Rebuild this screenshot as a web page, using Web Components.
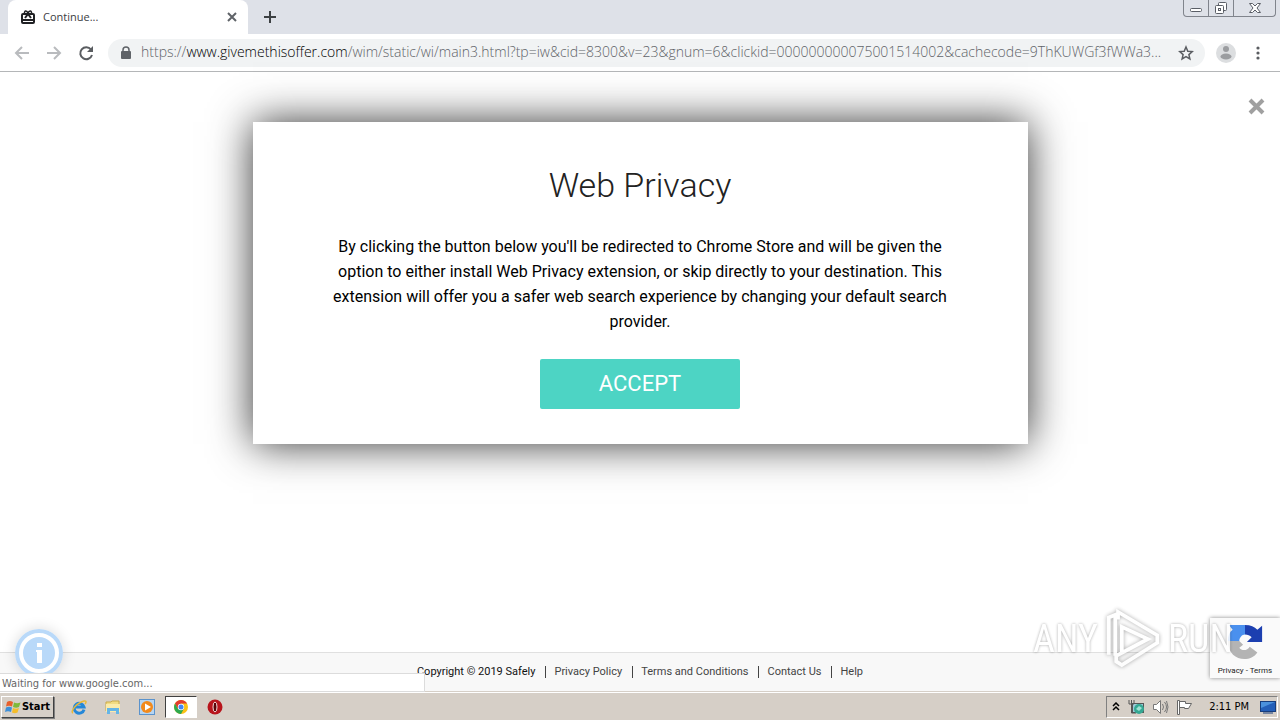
<!DOCTYPE html>
<html lang="en">
  <head>
    <meta charset="UTF-8" />
    <meta name="viewport" content="width=device-width, initial-scale=1.0" />
    <title>Continue...</title>
    <style>
      body {
        margin: 0;
        height: 100vh;
        display: flex;
        flex-direction: column;
        overflow: hidden;
        background: #fff;
        font-family: Roboto, "Liberation Sans", sans-serif;
      }
    </style>
  </head>
  <body>
    <template id="browser-tabs">
      <style>
        :host {
          display: flex;
          height: 34px;
          padding-left: 8px;
          background: #dee1e8;
        }
        button {
          border: 0;
          padding: 0;
          background: none;
          display: flex;
          align-items: center;
          justify-content: center;
        }
        .tab {
          box-sizing: border-box;
          width: 240px;
          padding: 0 9px 0 12px;
          display: flex;
          align-items: center;
          gap: 7px;
          background: #fff;
          border-radius: 8px 8px 0 0;
          font: 11px/16px "Open Sans", sans-serif;
          color: #3c4043;
        }
        .name {
          flex: 1;
        }
        .new {
          width: 44px;
        }
        .window {
          display: flex;
          margin-left: auto;
          margin-right: 4px;
          height: 17px;
          box-sizing: border-box;
          border: 1px solid #80848c;
          border-top: 0;
          border-radius: 0 0 4px 4px;
        }
        .window button {
          width: 25px;
          border-right: 1px solid #80848c;
        }
        .window button:last-child {
          width: 41px;
          border: 0;
        }
      </style>
      <div class="tab">
        <svg width="16" height="16" fill="none" stroke="#202124" stroke-width="2">
          <rect x="2" y="5" width="12" height="9" rx="1" />
          <path d="M2 11h12M5 9l3-4 3 4" />
          <path d="M8 4.500C7 1 4 1.500 4.500 4.500M8 4.500c1-3.500 4-3 3.500 0" stroke-width="1.500" />
        </svg>
        <span class="name"><slot></slot></span>
        <button aria-label="Close tab">
          <svg width="14" height="14" stroke="#5f6368" stroke-width="2"><path d="M3 3l8 8M11 3l-8 8" /></svg>
        </button>
      </div>
      <button class="new" aria-label="New tab">
        <svg width="14" height="14" stroke="#3c4043" stroke-width="2"><path d="M7 1v12M1 7h12" /></svg>
      </button>
      <div class="window">
        <button aria-label="Minimize">
          <svg width="14" height="14" fill="#fff" stroke="#5a5e66"><rect x="1.500" y="7.500" width="11" height="3" rx="1" /></svg>
        </button>
        <button aria-label="Restore">
          <svg width="14" height="14" fill="#fff" stroke="#5a5e66">
            <rect x="4.500" y="1.500" width="8" height="8" rx="1" />
            <rect x="1.500" y="4.500" width="8" height="8" rx="1" />
            <rect x="4.500" y="7.500" width="2" height="2" />
          </svg>
        </button>
        <button aria-label="Close">
          <svg width="14" height="14" viewBox="0 0 14 14" fill="#fff" stroke="#5a5e66">
            <path d="M1.500 2.500h3L7 5l2.500-2.500h3L9 7l3.500 4.500h-3L7 9l-2.500 2.500h-3L5 7z" />
          </svg>
        </button>
      </div>
    </template>

    <template id="browser-toolbar">
      <style>
        :host {
          display: flex;
          align-items: center;
          box-sizing: border-box;
          height: 38px;
          padding: 0 11px;
          gap: 10px;
          background: #fff;
          border-bottom: 1px solid #b4b6b8;
        }
        button {
          border: 0;
          padding: 0;
          background: none;
          width: 22px;
          height: 22px;
          flex: none;
          display: flex;
          align-items: center;
          justify-content: center;
        }
        .address {
          flex: 1;
          min-width: 0;
          height: 28px;
          margin-left: 1px;
          padding: 0 8px 0 12px;
          display: flex;
          align-items: center;
          gap: 9px;
          background: #f1f3f4;
          border-radius: 14px;
          font: 300 14px/20px "Open Sans", sans-serif;
          color: #5f6368;
        }
        .url {
          flex: 1;
          min-width: 0;
          padding-bottom: 1px;
          overflow: hidden;
          white-space: nowrap;
        }
        ::slotted(b) {
          font-weight: 300;
          color: #000;
        }
      </style>
      <button aria-label="Back">
        <svg width="16" height="16" fill="none" stroke="#b9bbbe" stroke-width="2"><path d="M15 8H2M8 2L2 8l6 6" /></svg>
      </button>
      <button aria-label="Forward">
        <svg width="16" height="16" fill="none" stroke="#b9bbbe" stroke-width="2"><path d="M1 8h13M8 2l6 6-6 6" /></svg>
      </button>
      <button aria-label="Reload">
        <svg width="16" height="16" fill="none" stroke="#5a5d61" stroke-width="2">
          <path d="M13 4.500A6 6 0 1 0 14 10" />
          <path d="M15 1v6H9z" fill="#5a5d61" stroke="none" />
        </svg>
      </button>
      <div class="address">
        <svg width="12" height="14" fill="#5f6368">
          <rect x="1" y="5" width="10" height="8" rx="1" />
          <path d="M3 6V4a3 3 0 0 1 6 0v2" fill="none" stroke="#5f6368" stroke-width="1.500" />
        </svg>
        <span class="url"><slot></slot></span>
        <button aria-label="Bookmark this page">
          <svg width="16" height="16" fill="none" stroke="#5a5d61" stroke-width="1.500">
            <path d="M8 2l1.800 4.200 4.500.4-3.400 3 1 4.400L8 11.700 4.100 14l1-4.400-3.400-3 4.500-.4z" />
          </svg>
        </button>
      </div>
      <button aria-label="Profile">
        <svg width="20" height="20" viewBox="0 0 20 20" fill="#9b9da0">
          <circle cx="10" cy="10" r="10" fill="#dcdee0" />
          <circle cx="10" cy="6" r="3" />
          <ellipse cx="10" cy="13.500" rx="5.500" ry="3" />
        </svg>
      </button>
      <button aria-label="Menu">
        <svg width="4" height="14" fill="#5a5d61">
          <circle cx="2" cy="2" r="1.600" /><circle cx="2" cy="7" r="1.600" /><circle cx="2" cy="12" r="1.600" />
        </svg>
      </button>
    </template>

    <template id="page-view">
      <style>
        :host {
          flex: 1;
          display: flex;
          flex-direction: column;
          position: relative;
          min-height: 0;
        }
        main {
          flex: 1;
          padding-top: 50px;
        }
        .close {
          position: absolute;
          top: 26px;
          right: 15px;
          border: 0;
          padding: 0;
          background: none;
          display: flex;
        }
      </style>
      <main><slot></slot></main>
      <button class="close" aria-label="Close">
        <svg width="17" height="17" stroke="#a0a0a0" stroke-width="4"><path d="M2 2l13 13M15 2L2 15" /></svg>
      </button>
      <slot name="footer"></slot>
      <slot name="overlay"></slot>
    </template>

    <template id="offer-dialog">
      <style>
        :host {
          display: block;
          box-sizing: border-box;
          max-width: 775px;
          margin: 0 auto;
          padding: 40px 75px 35px;
          background: #fff;
          box-shadow: 0 0 40px rgba(0, 0, 0, 0.8);
          text-align: center;
        }
        h1 {
          margin: 0 0 26px;
          font-size: 34px;
          line-height: 46px;
          font-weight: 300;
          color: #222;
        }
        p {
          margin: 0 0 25px;
          font-size: 16px;
          line-height: 25px;
          color: #000;
        }
        button {
          width: 200px;
          height: 50px;
          border: 0;
          border-radius: 2px;
          background: #4dd4c4;
          color: #fff;
          font: 22px/50px Roboto, sans-serif;
          padding: 0;
        }
      </style>
      <h1><slot name="title"></slot></h1>
      <p><slot></slot></p>
      <button><slot name="action"></slot></button>
    </template>

    <template id="page-footer">
      <style>
        :host {
          display: flex;
          justify-content: center;
          align-items: center;
          box-sizing: border-box;
          height: 40px;
          background: #f8f8f8;
          border-top: 1px solid #e0e0e0;
          border-bottom: 1px solid #d6cfc7;
          font-size: 11px;
          line-height: 12px;
          color: #111;
        }
        ::slotted(a) {
          margin-left: 10px;
          padding-left: 8px;
          border-left: 1px solid #444;
          color: #444;
          text-decoration: none;
        }
      </style>
      <slot></slot>
    </template>

    <template id="info-badge">
      <style>
        :host {
          position: absolute;
          left: 15px;
          bottom: 15px;
        }
        button {
          display: flex;
          padding: 0;
          border: 0;
          border-radius: 50%;
          background: none;
          box-shadow: 0 0 14px rgba(0, 0, 0, 0.15);
        }
      </style>
      <button aria-label="Information">
        <svg width="48" height="48">
          <circle cx="24" cy="24" r="24" fill="#b9d9f9" />
          <circle cx="24" cy="24" r="18" fill="#b9d9f9" stroke="#fff" stroke-width="4" />
          <path d="M22 14h5v4h-5zM21 21h6v13h-5V23h-1z" fill="#fff" />
        </svg>
      </button>
    </template>

    <template id="status-bubble">
      <style>
        :host {
          position: absolute;
          left: 0;
          bottom: 0;
          box-sizing: border-box;
          width: 425px;
          height: 19px;
          padding-left: 2px;
          background: #fff;
          border: 1px solid #dcdcdc;
          border-left: 0;
          font: 11px/19px "DejaVu Sans Condensed", "Noto Sans", sans-serif;
          color: #666;
        }
      </style>
      <slot></slot>
    </template>

    <template id="captcha-badge">
      <style>
        :host {
          position: absolute;
          right: 0;
          bottom: 14px;
          box-sizing: border-box;
          width: 70px;
          height: 60px;
          padding-top: 5px;
          display: flex;
          flex-direction: column;
          align-items: center;
          gap: 4px;
          background: #fafafa;
          box-shadow: 0 0 4px #888;
        }
        nav {
          font-size: 8px;
          line-height: 12px;
          color: #222;
        }
        a {
          color: inherit;
          text-decoration: none;
        }
      </style>
      <svg width="38" height="38" viewBox="0 0 40 40">
        <path d="M20 2v10c-3 0-6 3-6 7H2C2 13 4 9 7 7L3 2z" fill="#4a90ee" />
        <path d="M20 2c6 0 10 2 13 5l5-4v17H22l5-5c-2-2-4-3-7-3z" fill="#1c3fb0" />
        <path d="M2 19h12l4 4-4 3c2 3 8 4 11-1l8 6C25 43 2 40 2 19z" fill="#b4b4b4" />
      </svg>
      <nav><a href="#privacy">Privacy</a> - <a href="#terms">Terms</a></nav>
    </template>

    <template id="water-mark">
      <style>
        :host {
          position: absolute;
          right: 47px;
          bottom: 20px;
          display: flex;
          align-items: center;
          gap: 7px;
          font: 38px/40px "Roboto Condensed", "Liberation Sans Narrow", Roboto, sans-serif;
          color: #fff;
          text-shadow: 0 0 3px rgba(0, 0, 0, 0.4);
          opacity: 0.85;
          pointer-events: none;
        }
        svg {
          filter: drop-shadow(0 0 2px rgba(0, 0, 0, 0.4));
        }
      </style>
      <slot name="start"></slot>
      <svg width="56" height="66" viewBox="0 0 60 66" fill="none" stroke="#fff" stroke-width="4">
        <path d="M4 50V10l7-3v44M18 20v28l28-15zM14 12V4l42 25v8L18 61l-6-4v-6l34-18" />
      </svg>
      <slot name="end"></slot>
    </template>

    <template id="task-bar">
      <style>
        :host {
          display: flex;
          align-items: center;
          box-sizing: border-box;
          height: 28px;
          padding: 2px 2px 1px 1px;
          background: #d6cfc7;
          border-top: 1px solid #fff;
        }
        button {
          display: flex;
          align-items: center;
          justify-content: center;
          box-sizing: border-box;
          border: 0;
          padding: 0;
          background: none;
          height: 22px;
          width: 32px;
        }
        .start {
          width: 53px;
          gap: 1px;
          border: 1px solid;
          border-color: #fff #404040 #404040 #fff;
          box-shadow: 1px 1px 0 #808080;
          font: bold 11px/16px "DejaVu Sans Condensed", sans-serif;
          color: #000;
        }
        .quick {
          display: flex;
          flex: 1;
          gap: 2px;
          padding-left: 9px;
        }
        .active {
          background: #fff;
          border: 1px solid;
          border-color: #404040 #fff #fff #404040;
        }
        .tray {
          display: flex;
          align-items: center;
          box-sizing: border-box;
          height: 22px;
          padding-left: 4px;
          gap: 6px;
          border: 1px solid;
          border-color: #808080 #fff #fff #808080;
          font: 11px/18px "DejaVu Sans Condensed", sans-serif;
          color: #000;
        }
        .tray button {
          width: 18px;
          height: 20px;
        }
        .tray .more {
          width: 10px;
        }
        time {
          padding: 0 4px 0 10px;
        }
      </style>
      <button class="start">
        <svg width="16" height="16">
          <path d="M2 3c2-1.500 4-1 6 0L7 7.500c-2-1-4-1-6 0z" fill="#e8602c" />
          <path d="M9 3.500c2 1 4 1 6.500 0L14 8c-2 1-4 .8-6 0z" fill="#7fb93a" />
          <path d="M1 8.500c2-1 4-1 6 0L6 13c-2-1-4-1-6 0z" fill="#3d8fd8" />
          <path d="M8 9c2 1 4 1 6 0l-1.500 4.500c-2 1-3.500 1-5.500 0z" fill="#f5bd2a" />
        </svg>
        Start
      </button>
      <div class="quick">
        <button aria-label="Internet Explorer">
          <svg width="16" height="16" fill="none">
            <path d="M13 10.500A5 5 0 1 1 13 8H4" stroke="#2588d8" stroke-width="3" />
            <path d="M2 14C-1 13 5 4 13 2c3-.5 2 2 1 3" stroke="#eab936" stroke-width="1.500" />
          </svg>
        </button>
        <button aria-label="Explorer">
          <svg width="16" height="16">
            <path d="M1 3h5l1-1h7v10H1z" fill="#f2dc83" stroke="#c9a94a" />
            <path d="M1 5h14v8H1z" fill="#fbebaa" />
            <path d="M2 15V9h12v6h-3v-3H5v3z" fill="#65b5e6" />
          </svg>
        </button>
        <button aria-label="Media Player">
          <svg width="16" height="16">
            <rect x=".5" y=".5" width="15" height="15" fill="#b6d5f2" stroke="#5b93cc" />
            <circle cx="8" cy="8" r="6" fill="#f28a1c" />
            <path d="M6 4.500l6 3.500-6 3.500z" fill="#fff" />
          </svg>
        </button>
        <button class="active" aria-label="Chrome">
          <svg width="14" height="14" viewBox="0 0 14 14">
            <circle cx="7" cy="7" r="7" fill="#fbc116" />
            <path d="M1 3.500A7 7 0 0 1 13.100 3.500H7L4 9z" fill="#e33b2e" />
            <path d="M1 3.500A7 7 0 0 0 7 14l3-5.500-6 .5z" fill="#2da94f" />
            <circle cx="7" cy="7" r="3.200" fill="#fff" />
            <circle cx="7" cy="7" r="2.500" fill="#4285f4" />
          </svg>
        </button>
        <button aria-label="Opera">
          <svg width="16" height="16">
            <circle cx="8" cy="8" r="7.500" fill="#b8141c" />
            <ellipse cx="8" cy="8" rx="2" ry="5" fill="#5a0508" stroke="#f4dada" />
          </svg>
        </button>
      </div>
      <div class="tray">
        <button class="more" aria-label="Show hidden icons">
          <svg width="8" height="10" fill="none" stroke="#000" stroke-width="1.500"><path d="M1 4l3-3 3 3M1 8l3-3 3 3" /></svg>
        </button>
        <button aria-label="Network">
          <svg width="16" height="16">
            <rect x="4.500" y="4.500" width="11" height="9" fill="#9cc9d8" stroke="#555" />
            <path d="M1 1v4h5V1M3.500 1v13H8" fill="none" stroke="#555" />
            <circle cx="11" cy="10" r="5" fill="#35a893" />
            <path d="M8 10l3-3 3 2-3 3z" fill="#a0e2d3" />
          </svg>
        </button>
        <button aria-label="Volume">
          <svg width="17" height="16" fill="none" stroke="#777">
            <path d="M1.500 5.500h3l4-4v13l-4-4h-3z" fill="#fff" />
            <path d="M10.500 5q2 3 0 6M12.500 3q4 5 0 10M14.500 2q3 6 0 12" />
          </svg>
        </button>
        <button aria-label="Action Center">
          <svg width="16" height="16" fill="#fff" stroke="#666">
            <path d="M1.500 15.500v-14h2v14zM3.500 2.500h6v2h6l-3 5h-4v-1h-5z" />
          </svg>
        </button>
        <time>2:11 PM</time>
        <button aria-label="Show desktop">
          <svg width="16" height="14">
            <rect x=".5" y="1.500" width="15" height="10" fill="#245fb8" stroke="#173d7c" />
            <path d="M1 2h14L1 8z" fill="#4b91dc" />
            <path d="M3 13h10" stroke="#173d7c" />
          </svg>
        </button>
      </div>
    </template>

    <browser-tabs>Continue...</browser-tabs>
    <browser-toolbar
      >https://<b>www.givemethisoffer.com</b>/wim/static/wi/main3.html?tp=iw&amp;cid=8300&amp;v=23&amp;gnum=6&amp;clickid=000000000075001514002&amp;cachecode=9ThKUWGf3fWWa3...</browser-toolbar
    >
    <page-view>
      <offer-dialog>
        <span slot="title">Web Privacy</span>
        By clicking the button below you'll be redirected to Chrome Store and will be given the option to either
        install Web Privacy extension, or skip directly to your destination. This extension will offer you a safer web
        search experience by changing your default search provider.
        <span slot="action">ACCEPT</span>
      </offer-dialog>
      <page-footer slot="footer">
        <span>Copyright © 2019 Safely</span>
        <a href="#privacy">Privacy Policy</a>
        <a href="#terms">Terms and Conditions</a>
        <a href="#contact">Contact Us</a>
        <a href="#help">Help</a>
      </page-footer>
      <info-badge slot="overlay"></info-badge>
      <status-bubble slot="overlay">Waiting for www.google.com...</status-bubble>
      <captcha-badge slot="overlay"></captcha-badge>
      <water-mark slot="overlay">
        <span slot="start">ANY</span>
        <span slot="end">RUN</span>
      </water-mark>
    </page-view>
    <task-bar></task-bar>

    <script>
      // Every component only needs its own template, so one base class is enough
      class TemplateElement extends HTMLElement {
        constructor() {
          super();
          const template = document.getElementById(this.localName).content;
          this.attachShadow({ mode: "open" }).appendChild(template.cloneNode(true));
        }
      }

      customElements.define("browser-tabs", class BrowserTabs extends TemplateElement {});
      customElements.define("browser-toolbar", class BrowserToolbar extends TemplateElement {});
      customElements.define("page-view", class PageView extends TemplateElement {});
      customElements.define("offer-dialog", class OfferDialog extends TemplateElement {});
      customElements.define("page-footer", class PageFooter extends TemplateElement {});
      customElements.define("info-badge", class InfoBadge extends TemplateElement {});
      customElements.define("status-bubble", class StatusBubble extends TemplateElement {});
      customElements.define("captcha-badge", class CaptchaBadge extends TemplateElement {});
      customElements.define("water-mark", class WaterMark extends TemplateElement {});
      customElements.define("task-bar", class TaskBar extends TemplateElement {});
    </script>
  </body>
</html>
